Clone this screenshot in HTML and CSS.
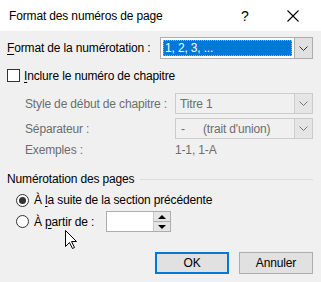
FILE: index.html
```html
<!DOCTYPE html>
<html lang="fr">
<head>
    <meta charset="utf-8">
    <title>Format des numéros de page</title>
    <link rel="stylesheet" href="styles.css">
</head>
<body>
    <div class="dialog">
        <div class="titlebar">
            <span class="title">Format des numéros de page</span>
            <span class="help">?</span>
            <span class="close">
                <svg width="12" height="12" viewBox="0 0 12 12"><path d="M0.5 0.5 L11.5 11.5 M11.5 0.5 L0.5 11.5" stroke="#000" stroke-width="1.1" fill="none"/></svg>
            </span>
        </div>

        <div class="content">
            <div class="row-format">
                <span class="lbl"><u>F</u>ormat de la numérotation :</span>
                <div class="combo combo-wide">
                    <div class="combo-val"><span class="sel">1, 2, 3, ...</span></div>
                    <span class="combo-btn"><svg width="9" height="5" viewBox="0 0 9 5"><path d="M0.5 0.5 L4.5 4.5 L8.5 0.5" stroke="#333" fill="none"/></svg></span>
                </div>
            </div>

            <div class="check-row">
                <span class="checkbox"></span>
                <span><u>I</u>nclure le numéro de chapitre</span>
            </div>

            <div class="chapter">
                <span class="dis">Style de début de chapitre :</span>
                <div class="combo combo-dis">
                    <div class="combo-val">Titre 1</div>
                    <span class="combo-btn"><svg width="9" height="5" viewBox="0 0 9 5"><path d="M0.5 0.5 L4.5 4.5 L8.5 0.5" stroke="#777" fill="none"/></svg></span>
                </div>
                <span class="dis">Séparateur :</span>
                <div class="combo combo-dis">
                    <div class="combo-val"><span class="dash">-</span>(trait d'union)</div>
                    <span class="combo-btn"><svg width="9" height="5" viewBox="0 0 9 5"><path d="M0.5 0.5 L4.5 4.5 L8.5 0.5" stroke="#777" fill="none"/></svg></span>
                </div>
                <span class="dis">Exemples :</span>
                <span class="dis">1-1, 1-A</span>
            </div>

            <div class="group">
                <span>Numérotation des pages</span>
                <span class="group-line"></span>
            </div>

            <div class="radio-row r1">
                <span class="radio on"></span>
                <span>À <u>l</u>a suite de la section précédente</span>
            </div>
            <div class="radio-row r2">
                <span class="radio"></span>
                <span class="r2-lbl">À <u>p</u>artir de :</span>
                <div class="spin">
                    <div class="spin-val"></div>
                    <div class="spin-btns">
                        <span class="spin-up"></span>
                        <span class="spin-down"></span>
                    </div>
                </div>
            </div>

            <div class="buttons">
                <button class="btn btn-default">OK</button>
                <button class="btn">Annuler</button>
            </div>
        </div>

        <svg class="cursor" width="13" height="20" viewBox="0 0 13 20"><path d="M0.5 0.5 V16.5 L4.5 12.5 L7.5 18.5 L9.5 17.5 L6.5 11.5 H11.5 Z" fill="#fff" stroke="#000" stroke-linejoin="miter"/></svg>
    </div>
</body>
</html>
```

FILE: styles.css
```css
html, body { margin:0; padding:0; }
body { background-color:#f0f0f0; font-family:'Liberation Sans', Arial, sans-serif; font-size:12px; letter-spacing:-0.15px; color:#000; }
u { text-decoration:underline; text-underline-offset:2px; }

.dialog { position:relative; width:321px; height:282px; overflow:hidden; }

/* title bar */
.titlebar { display:flex; align-items:center; height:31px; background-color:#fff; }
.titlebar .title { padding-left:9px; flex:1; font-size:12px; }
.titlebar .help { width:14px; font-size:14px; margin-right:32px; }
.titlebar .close { display:flex; width:12px; margin-right:22px; }

.content { padding:6px 8px 0 7px; }

/* format row */
.row-format { display:flex; align-items:center; height:22px; }
.row-format .lbl { width:153px; }

.combo { display:flex; box-sizing:border-box; border:1px solid #7a7a7a; background-color:#fff; }
.combo-wide { width:153px; height:22px; border-color:#adadad; }
.combo-val { flex:1; display:flex; align-items:center; padding:2px; }
.combo-wide .sel { flex:1; display:flex; align-items:center; height:14px; padding-left:1px; background-color:#0078d7; color:#fff; border:1px dotted #f0a030; }
.combo-btn { display:flex; align-items:center; justify-content:center; width:17px; background-color:#e1e1e1; border-left:1px solid #adadad; }

/* checkbox */
.check-row { display:flex; align-items:center; gap:4px; height:13px; margin-top:10px; }
.checkbox { width:13px; height:13px; box-sizing:border-box; border:1px solid #333; background-color:#fff; }

/* chapter */
.chapter { display:grid; grid-template-columns:150px 138px; grid-template-rows:21px 21px 14px; row-gap:4px; align-items:center; margin-top:11px; padding-left:18px; }
.dis { color:#6d6d6d; }
.combo-dis { height:21px; border-color:#cccccc; background-color:#f0f0f0; color:#6d6d6d; }
.combo-dis .combo-val { padding-left:4px; }
.combo-dis .combo-btn { background-color:#e5e5e5; border-left-color:#cccccc; }
.dash { display:inline-block; width:22px; padding-left:1px; }

/* group */
.group { display:flex; align-items:center; gap:6px; height:16px; margin-top:14px; }
.group-line { flex:1; height:1px; background-color:#dcdcdc; }

/* radios */
.radio-row { display:flex; align-items:center; gap:5px; padding-left:9px; }
.r1 { height:14px; margin-top:6px; }
.r2 { height:21px; margin-top:4px; }
.radio { width:13px; height:13px; box-sizing:border-box; border:1px solid #333; border-radius:50%; background-color:#fff; position:relative; }
.radio.on::after { content:''; position:absolute; left:2px; top:2px; width:7px; height:7px; border-radius:50%; background-color:#333; }
.r2-lbl { width:67px; }

.spin { display:flex; width:65px; height:21px; box-sizing:border-box; border:1px solid #adadad; background-color:#fff; }
.spin-val { flex:1; }
.spin-btns { display:flex; flex-direction:column; width:16px; border-left:1px solid #c8c8c8; }
.spin-up, .spin-down { flex:1; position:relative; background-color:#e5e5e5; }
.spin-up { border-bottom:1px solid #adadad; }
.spin-up::after, .spin-down::after { content:''; position:absolute; left:4px; width:0; height:0; border-left:4px solid transparent; border-right:4px solid transparent; }
.spin-up::after { top:3px; border-bottom:4px solid #000; }
.spin-down::after { top:3px; border-top:4px solid #000; }

/* buttons */
.buttons { display:flex; justify-content:flex-end; gap:10px; margin-top:20px; }
.btn { width:74px; height:22px; box-sizing:border-box; border:1px solid #adadad; background-color:#e1e1e1; font-family:'Liberation Sans', Arial, sans-serif; font-size:12px; letter-spacing:-0.15px; color:#000; padding:0; }
.btn-default { border:2px solid #0078d7; }

.cursor { position:absolute; left:65px; top:230px; }
```
